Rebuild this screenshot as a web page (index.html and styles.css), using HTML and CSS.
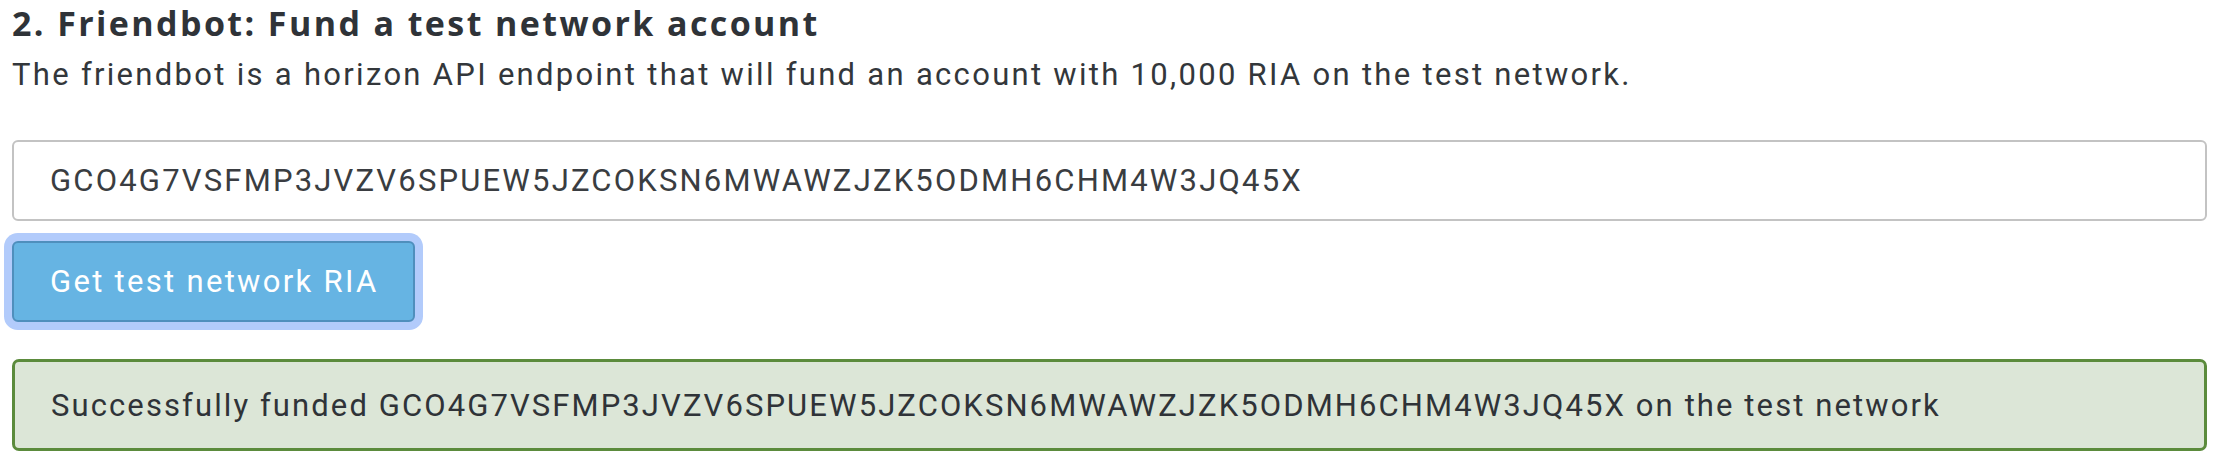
FILE: index.html
```html
<!DOCTYPE html>
<html lang="en">
<head>
<meta charset="utf-8">
<title>Friendbot</title>
<link rel="stylesheet" href="styles.css">
</head>
<body>
<main class="page">
  <h2 class="title">2. Friendbot: Fund a test network account</h2>
  <p class="lead">The friendbot is a horizon API endpoint that will fund an account with 10,000 RIA on the test network.</p>
  <input class="field" type="text" value="GCO4G7VSFMP3JVZV6SPUEW5JZCOKSN6MWAWZJZK5ODMH6CHM4W3JQ45X" readonly>
  <div class="actions">
    <button class="btn" type="button">Get test network RIA</button>
  </div>
  <div class="alert">Successfully funded GCO4G7VSFMP3JVZV6SPUEW5JZCOKSN6MWAWZJZK5ODMH6CHM4W3JQ45X on the test network</div>
</main>
</body>
</html>
```

FILE: styles.css
```css
* { box-sizing: border-box; }
html, body { margin: 0; padding: 0; background: #ffffff; }
body {
  font-family: Roboto, "Liberation Sans", sans-serif;
  color: #33373b;
}
.page {
  display: flex;
  flex-direction: column;
  padding: 3px 17px 0 12px;
}
.title {
  margin: 0;
  font-family: "Open Sans", "Liberation Sans", sans-serif;
  font-size: 34px;
  line-height: 40px;
  font-weight: 700;
  letter-spacing: 2.4px;
  color: #2f3338;
}
.lead {
  margin: 12px 0 0 0;
  font-size: 31px;
  line-height: 40px;
  letter-spacing: 2.3px;
}
.field {
  margin-top: 45px;
  height: 81px;
  width: 100%;
  border: 2px solid #c3c3c3;
  border-radius: 6px;
  padding: 0 36px;
  font-family: Roboto, "Liberation Sans", sans-serif;
  font-size: 31px;
  color: #3a3d41;
  letter-spacing: 2.2px;
  background: #fff;
  outline: none;
}
.actions {
  display: flex;
  margin-top: 20px;
}
.btn {
  height: 81px;
  width: 403px;
  border: 2px solid #4f8fbd;
  border-radius: 6px;
  background: #66b4e3;
  color: #ffffff;
  font-family: Roboto, "Liberation Sans", sans-serif;
  font-size: 31px;
  letter-spacing: 2.3px;
  padding: 0 20px 0 36px;
  white-space: nowrap;
  text-align: left;
  box-shadow: 0 0 0 8px #b2cbfb;
  cursor: pointer;
}
.alert {
  margin-top: 37px;
  height: 92px;
  display: flex;
  align-items: center;
  border: 3px solid #5b8b3c;
  border-radius: 7px;
  background: #dce6d7;
  padding: 0 36px;
  font-size: 31px;
  letter-spacing: 2.1px;
  color: #2f3338;
}
```
